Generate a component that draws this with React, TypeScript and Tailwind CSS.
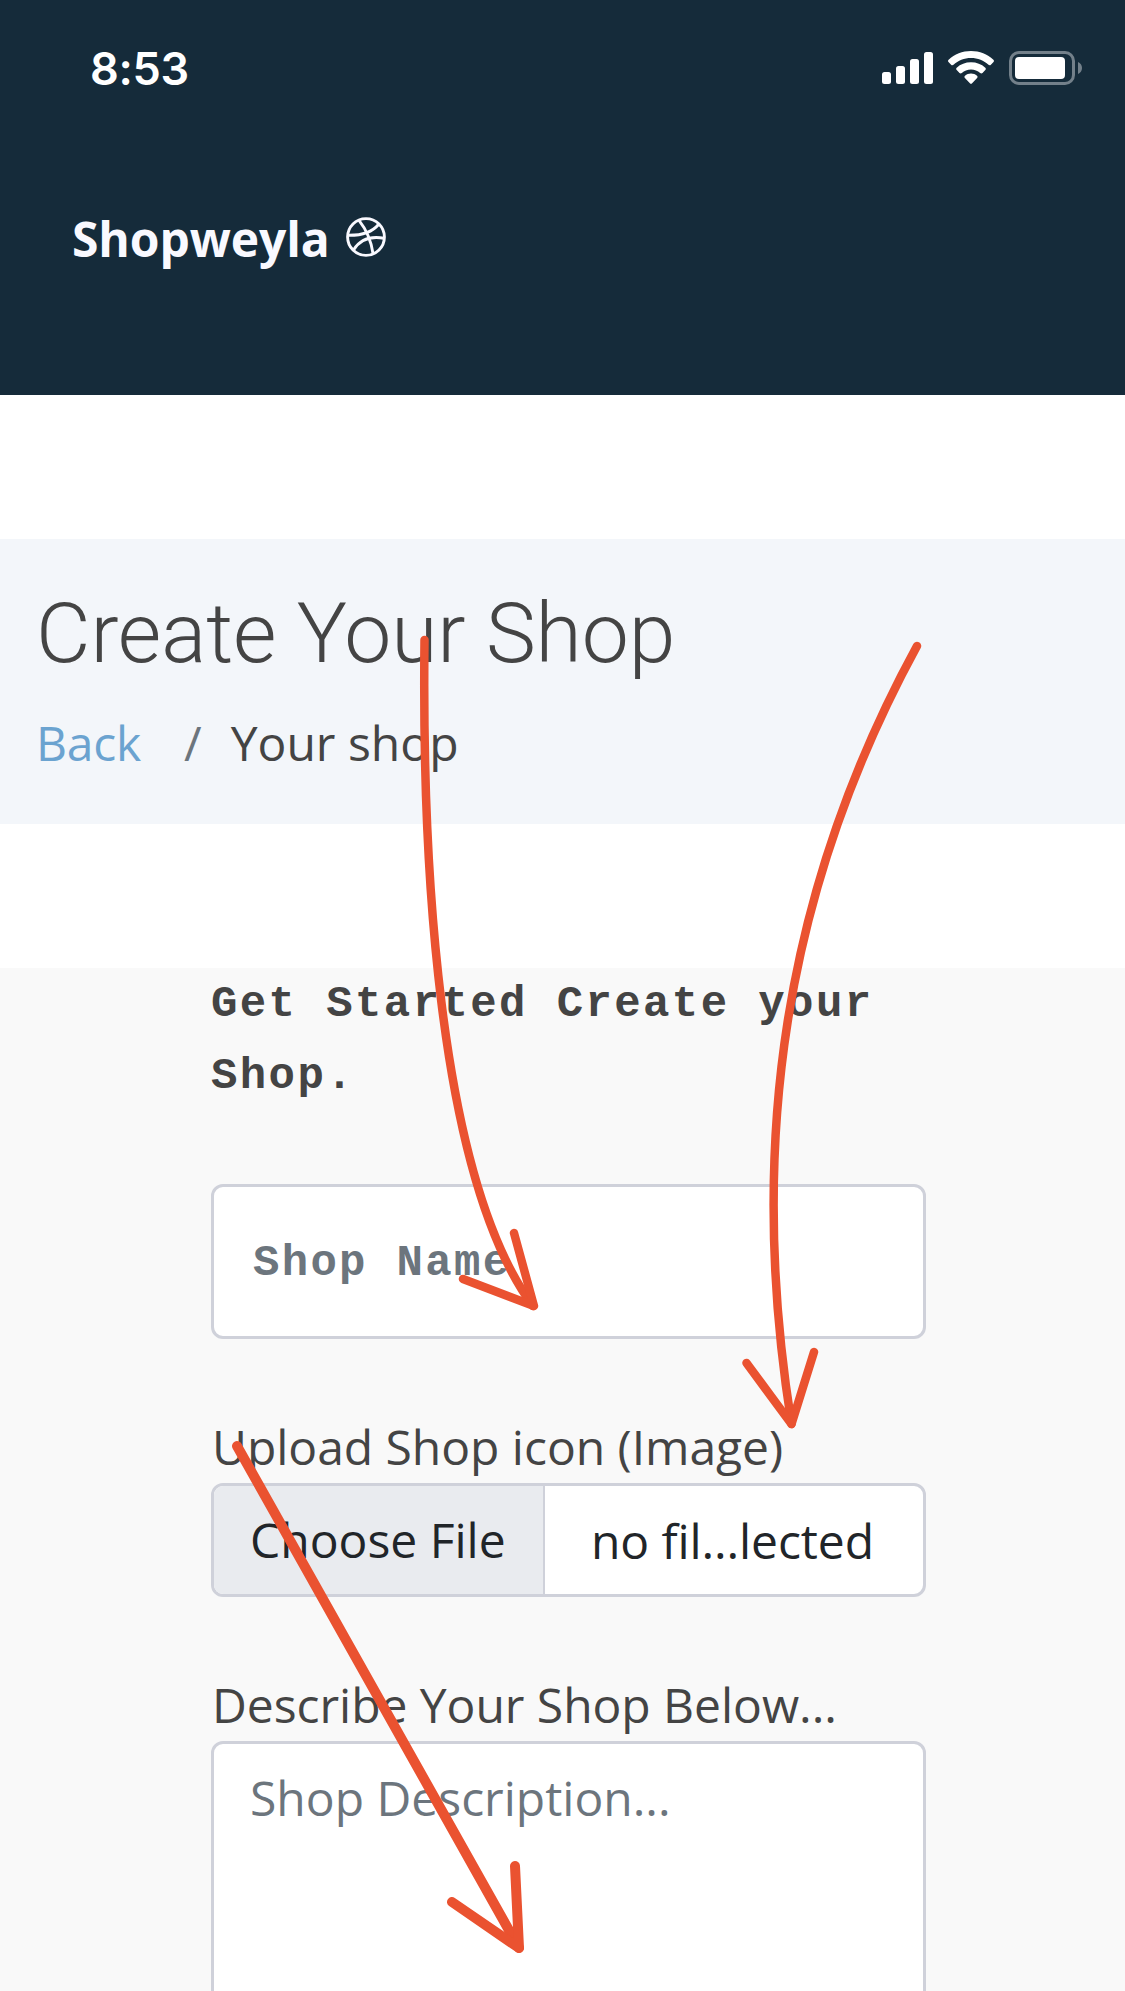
import React from "react";

function BallIcon() {
  return (
    <svg
      className="mb-[5px] ml-[16px] size-[40px]"
      viewBox="0 0 40 40"
      fill="none"
      stroke="#f9f9ff"
      strokeWidth="2.900"
    >
      <circle cx="20" cy="20" r="18.400" />
      <path d="M13 3.300C19.500 11.500 25 22.500 27 36.500" />
      <path d="M2 18.300C14 18.500 25.500 16 32.500 7.500" />
      <path d="M7.500 33C14 22.500 24 18.700 38 21.300" />
    </svg>
  );
}

function StatusIcons() {
  return (
    <svg className="h-[36px] w-[202px]" viewBox="881 50 202 36" fill="none">
      <g fill="#fff">
        <rect x="882" y="72" width="9" height="12" rx="2.5" />
        <rect x="896" y="66" width="9" height="18" rx="2.5" />
        <rect x="910" y="59" width="9" height="25" rx="2.5" />
        <rect x="924" y="52" width="9" height="32" rx="2.5" />
        <path d="M971 51c8.600 0 16.500 3.300 22.400 8.700.7.700.7 1.700.1 2.400l-2.600 2.600c-.7.700-1.700.7-2.400.1C983.900 60.400 977.800 58 971 58s-12.900 2.400-17.500 6.800c-.7.600-1.700.6-2.400-.1l-2.600-2.600c-.6-.7-.6-1.700.1-2.400C954.500 54.300 962.400 51 971 51z" />
        <path d="M971 62.300c5.500 0 10.500 2 14.300 5.400.7.700.7 1.700 0 2.400l-2.800 2.800c-.6.600-1.600.7-2.300.1-2.500-2.200-5.700-3.600-9.200-3.600s-6.700 1.400-9.200 3.600c-.7.600-1.700.5-2.300-.1l-2.800-2.800c-.7-.7-.7-1.700 0-2.400 3.800-3.400 8.800-5.400 14.300-5.400z" />
        <path d="M971 73.600c2.300 0 4.400.8 6 2.200.7.600.7 1.600.1 2.300l-5 5.200c-.6.700-1.600.7-2.200 0l-5-5.200c-.6-.7-.6-1.700.1-2.300 1.600-1.400 3.700-2.200 6-2.200z" />
        <rect x="1015" y="57" width="50" height="22" rx="4" />
      </g>
      <rect x="1010.500" y="52.500" width="63" height="31" rx="8.500" stroke="#73808a" strokeWidth="3" />
      <path d="M1078 62c2.400.9 4 3.300 4 6s-1.600 5.100-4 6z" fill="#73808a" />
    </svg>
  );
}

function Arrows() {
  return (
    <svg
      className="pointer-events-none absolute left-0 top-0 h-[1991px] w-[1125px]"
      viewBox="0 0 1125 1991"
      fill="none"
      stroke="#ea5230"
      strokeLinecap="round"
      strokeLinejoin="round"
    >
      <g strokeWidth="8.500">
        <path d="M424.500 640C422 850 436 1175 533 1306" />
        <path d="M514 1233L534 1306L463 1279" />
        <path d="M917 646C784 890 747 1144 791.500 1424" />
        <path d="M746.500 1363L791.500 1424L814 1352" />
      </g>
      <g strokeWidth="10">
        <path d="M237 1446L519 1948" />
        <path d="M515 1866L519 1948L452 1902" />
      </g>
    </svg>
  );
}

export default function App() {
  return (
    <div className="relative h-[1991px] w-[1125px] overflow-hidden bg-white font-['Open_Sans',sans-serif] text-[48px] leading-[72px] text-[#444444]">
      <header className="h-[395px] bg-[#152b3a] text-white">
        <div className="flex items-start justify-between pl-[90px] pr-[42px] pt-[50px]">
          <div className="h-[36px] font-['Inter',sans-serif] text-[45px] font-semibold leading-[37px] tracking-[-0.3px]">8:53</div>
          <StatusIcons />
        </div>
        <div className="flex items-center pl-[72px] pt-[117px]">
          <h1 className="font-bold tracking-[-0.1px] text-[#f9f9ff]">Shopweyla</h1>
          <BallIcon />
        </div>
      </header>

      <section className="mt-[144px] h-[285px] bg-[#f3f6fa] pl-[36px] pt-[44px]">
        <h2 className="font-['Roboto',sans-serif] text-[84px] font-light leading-[101px] tracking-[-0.1px]">Create Your Shop</h2>
        <nav className="mt-[23px] flex">
          <a className="tracking-[-0.2px] text-[#6ba3d0]">Back</a>
          <span className="ml-[43px] text-[#6c757d]">/</span>
          <span className="ml-[29px]">Your shop</span>
        </nav>
      </section>

      <main className="mt-[144px] h-[1023px] bg-[#f9f9f9] pl-[211px] pr-[199px]">
        <h3 className="font-['Courier_New','Liberation_Mono',monospace] text-[44px] font-bold leading-[72px] tracking-[2.4px]">
          Get Started Create your Shop.
        </h3>
        <div className="mt-[72px] flex h-[155px] items-center rounded-[12px] border-[3px] border-[#cfd1da] bg-white pl-[39px] pt-[2px] font-['Courier_New','Liberation_Mono',monospace] text-[44px] font-bold tracking-[2.3px] text-[#6c757d]">
          Shop Name
        </div>
        <label className="mt-[72px] block pl-px tracking-[-0.04px]">Upload Shop icon (Image)</label>
        <div className="flex h-[114px] items-center overflow-hidden rounded-[12px] border-[3px] border-[#cfd1da] bg-white text-[#212529]">
          <div className="flex h-full w-[331px] items-center border-r-[2px] border-[#cfd1da] bg-[#e9ebef] pl-[36px]">
            Choose File
          </div>
          <span className="ml-[46px] mt-[2px] tracking-[-0.1px]">no fil...lected</span>
        </div>
        <label className="mt-[72px] block pl-px tracking-[-0.04px]">Describe Your Shop Below...</label>
        <div className="h-[280px] rounded-[12px] border-[3px] border-[#cfd1da] bg-white pl-[36px] pt-[18px] text-[#6c757d]">
          Shop Description...
        </div>
      </main>
      <Arrows />
    </div>
  );
}
